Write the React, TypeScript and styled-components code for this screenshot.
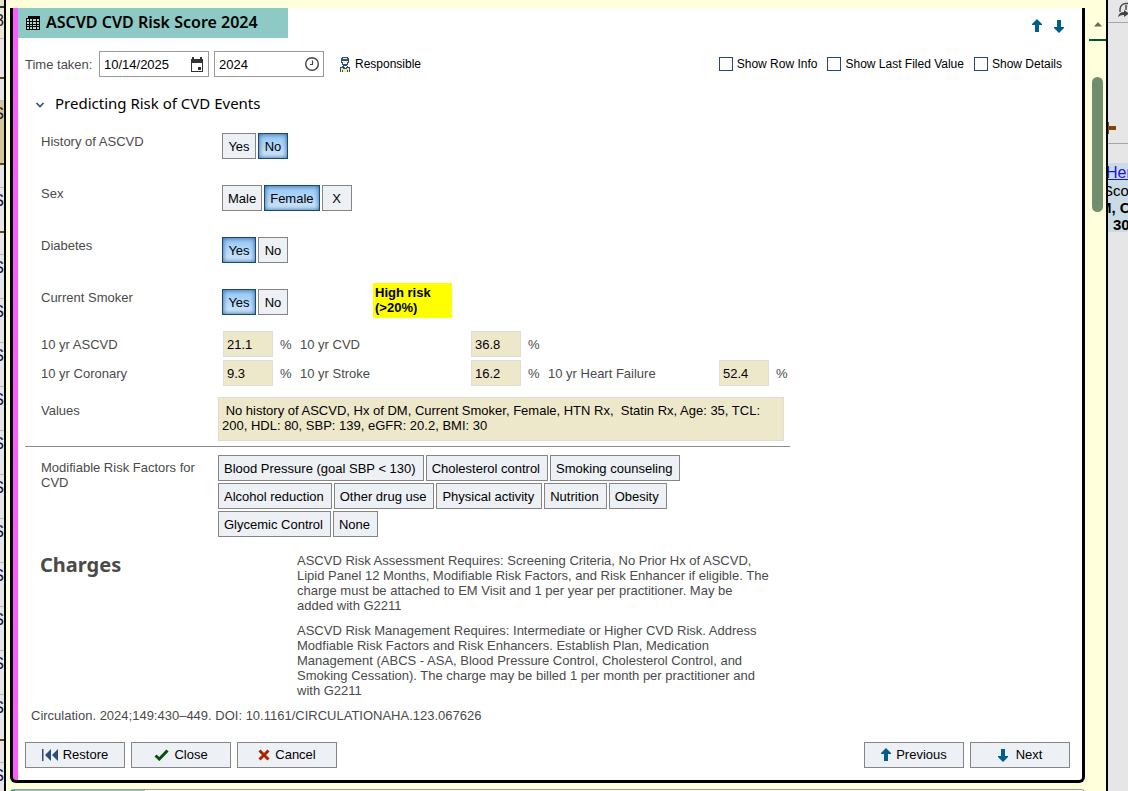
import React from 'react';
import styled, { createGlobalStyle, css } from 'styled-components';

const Global = createGlobalStyle`
  *, *::before, *::after { box-sizing: border-box; }
  body {
    margin: 0;
    background: #ffffdc;
    color: #000;
    font: 13px/15px "Liberation Sans", Arial, sans-serif;
  }
  button, input, textarea { font: inherit; color: inherit; }
  h1, h2, h3, p { margin: 0; }
`;

const Page = styled.div`
  display: grid;
  grid-template-columns: 6px minmax(0, 1fr) 17px 22px;
  height: 100vh;
  overflow: hidden;
`;

/* Sliver of the flowsheet on the left */
const Flowsheet = styled.div`
  border-right: 2px solid #000;
  background: #e6e6e9;
  overflow: hidden;
`;

const FlowCell = styled.div<{ $h: number; $bg?: string; $line?: string }>`
  display: flex;
  justify-content: flex-end;
  height: ${p => p.$h}px;
  background: ${p => p.$bg || '#e6e6e9'};
  border-bottom: ${p => (p.$line ? `2px solid ${p.$line}` : '1px solid #bdbdbd')};
  font-size: 16px;
  line-height: 25px;
  color: #14143c;
`;

const Center = styled.div`
  display: flex;
  flex-direction: column;
  padding: 8px 4px 0;
  min-width: 0;
`;

const Panel = styled.section`
  flex: none;
  border: 3px solid #000;
  border-top: 0;
  border-radius: 0 0 6px 6px;
  background: #000;
`;

const PanelBody = styled.div`
  border-left: 5px solid #ff5cff;
  border-radius: 0 0 3px 3px;
  background: #fff;
  padding-bottom: 12px;
`;

const TitleRow = styled.header`
  display: flex;
  justify-content: space-between;
  align-items: flex-start;
`;

const Title = styled.h1`
  display: flex;
  align-items: center;
  gap: 6px;
  width: 270px;
  height: 30px;
  padding-left: 8px;
  background: #8dcac5;
  font: 600 16px/28px "Noto Sans", "Open Sans", sans-serif;
  white-space: nowrap;
`;

const TitleText = styled.span`
  padding-bottom: 2px;
`;

const Arrows = styled.div`
  display: flex;
  gap: 6px;
  padding: 11px 15px 0 0;
`;

const IconButton = styled.button`
  display: flex;
  justify-content: center;
  width: 16px;
  padding: 0;
  border: 0;
  background: none;
`;

const Toolbar = styled.div`
  display: flex;
  align-items: center;
  padding: 13px 20px 0 7px;
`;

const TimeLabel = styled.label`
  width: 74px;
  color: #4a4a4a;
`;

const Picker = styled.div`
  display: flex;
  align-items: center;
  width: 110px;
  height: 26px;
  margin-right: 5px;
  padding-right: 4px;
  border: 1px solid #999;
`;

const PickerInput = styled.input`
  flex: 1;
  min-width: 0;
  height: 24px;
  padding: 0 4px;
  border: 0;
  background: none;
  outline: 0;
`;

const Responsible = styled.button`
  display: flex;
  align-items: center;
  gap: 5px;
  margin-left: 11px;
  padding: 0;
  border: 0;
  background: none;
  font-size: 12px;
`;

const Checks = styled.div`
  display: flex;
  gap: 10px;
  margin-left: auto;
  font-size: 12px;
`;

const CheckLabel = styled.label`
  display: flex;
  align-items: center;
  gap: 4px;
  white-space: nowrap;
`;

const Check = styled.input`
  appearance: none;
  width: 14px;
  height: 14px;
  margin: 0;
  border: 1px solid #27456f;
  background: #fff;
  &:checked { background: #27456f; }
`;

const SectionTitle = styled.h2`
  display: flex;
  align-items: center;
  gap: 10px;
  padding: 14px 0 18px 17px;
  font: 400 15px/24px "Noto Sans", "Open Sans", sans-serif;
  svg { margin-top: 4px; }
`;

const Form = styled.div`
  max-width: 772px;
  padding-left: 7px;
  color: #4a4a4a;
`;

const Question = styled.div`
  display: flex;
  height: 52px;
  padding-left: 16px;
`;

const QuestionLabel = styled.div<{ $narrow?: boolean }>`
  flex: none;
  width: ${p => (p.$narrow ? '177px' : '181px')};
  padding: ${p => (p.$narrow ? '5px 12px 0 0' : '1px 0 0')};
`;

const Options = styled.div`
  display: flex;
  flex-wrap: wrap;
  align-content: flex-start;
  gap: 2px;
`;

const pressed = css`
  border-color: #174a73;
  background: linear-gradient(#94c6f6, #d2e8ff);
  box-shadow: inset 0 0 5px #2b5f91;
`;

const Option = styled.button<{ $on?: boolean }>`
  height: 26px;
  min-width: 30px;
  padding: 0 5px;
  border: 1px solid #858585;
  background: #edf0f4;
  color: #000;
  white-space: nowrap;
  &:first-child { min-width: 34px; }
  ${p => p.$on && pressed}
`;

const Risk = styled.output`
  width: 79px;
  height: 35px;
  margin: -6px 0 0 85px;
  padding: 2px;
  background: #ff0;
  color: #000;
  font-weight: 700;
`;

const Scores = styled.div`
  display: grid;
  gap: 3px;
  padding: 0 0 11px 16px;
  margin-top: -10px;
`;

const ScoreRow = styled.div`
  display: flex;
`;

const Score = styled.div`
  display: flex;
  align-items: center;
  &:not(:last-child) { margin-right: 8px; }
`;

const ScoreLabel = styled.label<{ $first?: boolean }>`
  width: ${p => (p.$first ? '182px' : '171px')};
`;

const ScoreInput = styled.input`
  width: 50px;
  height: 26px;
  padding: 0 3px;
  border: 1px solid #dcdcdc;
  background: #eee8cb;
  color: #000;
`;

const Unit = styled.span`
  width: 12px;
  margin-left: 7px;
`;

const ValuesRow = styled.div`
  display: flex;
  padding: 0 6px 5px 16px;
`;

const ValuesLabel = styled.label`
  flex: none;
  width: 177px;
  padding-top: 6px;
`;

const ValuesBox = styled.textarea`
  flex: 1;
  height: 44px;
  padding: 5px 3px;
  border: 1px solid #dcdcdc;
  background: #eee8cb;
  color: #000;
  resize: none;
  overflow: hidden;
`;

const Rule = styled.hr`
  margin: 0;
  border: 0;
  border-top: 1px solid #8c8c8c;
`;

const Factors = styled.div`
  display: flex;
  padding: 8px 0 0 16px;
`;

const FactorOptions = styled(Options)`
  max-width: 480px;
  ${Option} { padding: 0 7px 0 5px; }
`;

const Charges = styled.div`
  display: flex;
  padding: 16px 8px 0 15px;
`;

const ChargesTitle = styled.h3`
  flex: none;
  width: 257px;
  font: 700 20px/24px "Noto Sans", "Open Sans", sans-serif;
`;

const ChargesText = styled.div`
  display: grid;
  gap: 10px;
  max-width: 474px;
`;

const Citation = styled.p`
  padding: 10px 0 19px 6px;
`;

const Footer = styled.footer`
  display: flex;
  gap: 6px;
  padding: 0 12px 0 7px;
`;

const Spacer = styled.div`
  flex: 1;
`;

const Action = styled.button<{ $gap?: number }>`
  display: flex;
  align-items: center;
  justify-content: center;
  gap: ${p => p.$gap || 5}px;
  width: 100px;
  height: 26px;
  padding: 0 0 1px;
  border: 1px solid #858585;
  background: #edf0f4;
`;

const NextPanel = styled.div`
  flex: none;
  height: 40px;
  margin-top: 6px;
  border: 1px solid #999;
  border-left: 5px solid #1f9a92;
  border-radius: 4px 4px 0 0;
  background: #fff;
`;

const NextTitle = styled.div`
  width: 130px;
  height: 30px;
  background: #8dcac5;
`;

const Scroll = styled.div`
  display: flex;
  flex-direction: column;
  align-items: center;
  padding: 22px 0 14px;
  > svg { flex: none; margin-bottom: 12px; }
`;

const ScrollEdge = styled.div`
  flex: none;
  align-self: stretch;
  height: 2px;
  background: #00543c;
`;

const Thumb = styled.div`
  width: 11px;
  height: 135px;
  margin: 36px 0 auto;
  border-radius: 6px;
  background: #6f8f6c;
`;

const Side = styled.aside`
  border-left: 2px solid #000;
  background: #e6e6e6;
  overflow: hidden;
`;

const SideHead = styled.div`
  height: 23px;
  padding: 2px 0 0 9px;
  border-bottom: 1px solid #a6a6a6;
`;

const SideBand = styled.div`
  height: 121px;
  padding-top: 99px;
  border-bottom: 1px solid #a6a6a6;
`;

const SideCard = styled.div`
  margin-top: 19px;
  height: 69px;
  background: #cbdbe6;
  font-size: 15px;
  line-height: 17px;
  white-space: nowrap;
`;

const SideLink = styled.a`
  display: block;
  margin-left: -2px;
  font-size: 16px;
  line-height: 19px;
  color: #1414e6;
`;

const SideLine = styled.div<{ $bold?: boolean; $shift?: number }>`
  margin-left: ${p => p.$shift || 0}px;
  font-weight: ${p => (p.$bold ? 700 : 400)};
`;

const ArrowIcon = ({ down = false }: { down?: boolean }) => (
  <svg width="10" height="14" viewBox="0 0 10 14" aria-hidden="true">
    <path
      d={down ? 'M3 1H7V8H10V9L5 14L0 9V8H3Z' : 'M3 13H7V6H10V5L5 0L0 5V6H3Z'}
      fill="#005f88"
    />
  </svg>
);

const TableIcon = () => (
  <svg width="14" height="14" viewBox="0 0 14 14" aria-hidden="true" shapeRendering="crispEdges">
    <path d="M2 0H14V14H0V2H2Z" fill="#000" />
    <path
      d="M1 3h2v2H1zM4 3h2v2H4zM7 3h3v2H7zM11 3h2v2h-2zM1 6h2v2H1zM4 6h2v2H4zM7 6h3v2H7zM11 6h2v2h-2zM1 9h2v1H1zM4 9h2v1H4zM7 9h3v1H7zM11 9h2v1h-2zM1 11h2v2H1zM4 11h2v2H4zM7 11h3v2H7zM11 11h2v2h-2z"
      fill="#a5dad6"
    />
  </svg>
);

const CalendarIcon = () => (
  <svg width="14" height="15" viewBox="0 0 14 15" aria-hidden="true" shapeRendering="crispEdges">
    <path d="M1 2H2V0H4V2H10V0H12V2H13V15H1ZM2 6V14H12V6Z" fill="#333" fillRule="evenodd" />
    <rect x="8" y="10" width="3" height="3" fill="#333" />
  </svg>
);

const ClockIcon = () => (
  <svg width="14" height="14" viewBox="0 0 14 14" aria-hidden="true" fill="none" stroke="#444">
    <circle cx="7" cy="7" r="6.3" strokeWidth="1.4" />
    <path d="M7.5 3.5V7.5H5" strokeWidth="1.2" />
  </svg>
);

const PersonIcon = () => (
  <svg width="10" height="15" viewBox="0 0 10 15" aria-hidden="true" shapeRendering="crispEdges">
    <path d="M2 0H8V1H9V6H8V8H7V9H3V8H2V6H1V1H2Z" fill="#2d5080" />
    <path d="M3 1H7V2H3Z" fill="#fff3a8" />
    <path d="M2 4H8V5H7V7H3V5H2Z" fill="#fff3c8" />
    <path d="M0 10H2V9H3L5 11L7 9H8V10H10V15H0Z" fill="#2d5080" />
    <path d="M1 11H3V12H7V11H9V15H8V13H7V15H3V13H2V15H1Z" fill="#ffeb91" />
    <path d="M3 12H7V15H3Z" fill="#ffeb91" />
  </svg>
);

const ChevronIcon = () => (
  <svg width="10" height="6" viewBox="0 0 10 6" aria-hidden="true">
    <path d="M1.5 1L5 4.5L8.5 1" fill="none" stroke="#2b4c7e" strokeWidth="1.6" />
  </svg>
);

const RestoreIcon = () => (
  <svg width="16" height="12" viewBox="0 0 16 12" aria-hidden="true">
    <path d="M0 0H1.5V12H0ZM9 0V12L3 6ZM16 0V12L10 6Z" fill="#2b4c78" />
  </svg>
);

const CheckIcon = () => (
  <svg width="15" height="12" viewBox="0 0 15 12" aria-hidden="true">
    <path d="M1.5 6.5L5.3 10L13.5 1.5" fill="none" stroke="#075207" strokeWidth="3" />
  </svg>
);

const CrossIcon = () => (
  <svg width="12" height="12" viewBox="0 0 12 12" aria-hidden="true">
    <path d="M1.5 1.5L10.5 10.5M10.5 1.5L1.5 10.5" stroke="#ab2500" strokeWidth="3" />
  </svg>
);

const ScrollUpIcon = () => (
  <svg width="8" height="5" viewBox="0 0 8 5" aria-hidden="true">
    <path d="M4 0L8 4.5H0Z" fill="#6b6b45" />
  </svg>
);

const ForwardIcon = () => (
  <svg width="20" height="17" viewBox="0 0 20 17" aria-hidden="true" fill="none" stroke="#444">
    <path d="M3 10V7A6 6 0 0 1 9 1.5H16" strokeWidth="1.4" />
    <path d="M9 3V8M11 4L16 9" strokeWidth="1.4" />
    <path d="M1 15Q2 10 7 10V8L12 11.5L7 15V13Q4 12.5 1 15Z" fill="#444" stroke="none" />
  </svg>
);

const MarkerIcon = () => (
  <svg width="9" height="12" viewBox="0 0 9 12" aria-hidden="true">
    <path d="M0 0H1V4H8V8H1V12H0Z" fill="#7a4a0c" />
  </svg>
);

const flow = [
  { h: 8, bg: '#e8e4d2', line: '#333' },
  { h: 31, bg: '#ebe7d2', t: '3' },
  { h: 40, line: '#5c4c14' },
  { h: 22 },
  { h: 64, bg: '#d6c697', line: '#5c4c14', t: 'S' },
  { h: 23 },
  { h: 45, line: '#5c4c14', t: 'S' },
  { h: 22 },
  { h: 44, t: 'S' },
  { h: 44, t: 'S' },
  { h: 44, t: 'S' },
  { h: 44, t: 'S' },
  { h: 44, t: 'S' },
  { h: 44, t: 'S' },
  { h: 44, t: 'S' },
  { h: 44, t: 'S' },
  { h: 44, t: 'S' },
  { h: 44, t: 'S' },
  { h: 46, t: 'S', line: '#5c4c14' },
  { h: 22 },
  { h: 44, t: 'S' },
];

const questions = [
  { label: 'History of ASCVD', options: ['Yes', 'No'], on: 'No' },
  { label: 'Sex', options: ['Male', 'Female', 'X'], on: 'Female' },
  { label: 'Diabetes', options: ['Yes', 'No'], on: 'Yes' },
  { label: 'Current Smoker', options: ['Yes', 'No'], on: 'Yes', risk: 'High risk (>20%)' },
];

const scores = [
  [['10 yr ASCVD', '21.1'], ['10 yr CVD', '36.8']],
  [['10 yr Coronary', '9.3'], ['10 yr Stroke', '16.2'], ['10 yr Heart Failure', '52.4']],
];

const factors = [
  'Blood Pressure (goal SBP < 130)', 'Cholesterol control', 'Smoking counseling',
  'Alcohol reduction', 'Other drug use', 'Physical activity', 'Nutrition', 'Obesity',
  'Glycemic Control', 'None',
];

export default function App() {
  return (
    <Page>
      <Global />
      <Flowsheet>
        {flow.map((c, i) => (
          <FlowCell key={i} $h={c.h} $bg={c.bg} $line={c.line}>{c.t}</FlowCell>
        ))}
      </Flowsheet>

      <Center>
        <Panel>
          <PanelBody>
            <TitleRow>
              <Title><TableIcon /><TitleText>ASCVD CVD Risk Score 2024</TitleText></Title>
              <Arrows>
                <IconButton aria-label="Previous section"><ArrowIcon /></IconButton>
                <IconButton aria-label="Next section"><ArrowIcon down /></IconButton>
              </Arrows>
            </TitleRow>

            <Toolbar>
              <TimeLabel htmlFor="date">Time taken:</TimeLabel>
              <Picker><PickerInput id="date" defaultValue="10/14/2025" /><CalendarIcon /></Picker>
              <Picker><PickerInput aria-label="Time" defaultValue="2024" /><ClockIcon /></Picker>
              <Responsible><PersonIcon />Responsible</Responsible>
              <Checks>
                {['Show Row Info', 'Show Last Filed Value', 'Show Details'].map(t => (
                  <CheckLabel key={t}><Check type="checkbox" />{t}</CheckLabel>
                ))}
              </Checks>
            </Toolbar>

            <SectionTitle><ChevronIcon />Predicting Risk of CVD Events</SectionTitle>

            <Form>
              {questions.map(q => (
                <Question key={q.label} role="group" aria-label={q.label}>
                  <QuestionLabel>{q.label}</QuestionLabel>
                  <Options>
                    {q.options.map(o => (
                      <Option key={o} $on={o === q.on} aria-pressed={o === q.on}>{o}</Option>
                    ))}
                  </Options>
                  {q.risk && <Risk>{q.risk}</Risk>}
                </Question>
              ))}

              <Scores>
                {scores.map((row, r) => (
                  <ScoreRow key={r}>
                    {row.map(([label, value], i) => (
                      <Score key={label}>
                        <ScoreLabel $first={i === 0} htmlFor={label}>{label}</ScoreLabel>
                        <ScoreInput id={label} defaultValue={value} readOnly />
                        <Unit>%</Unit>
                      </Score>
                    ))}
                  </ScoreRow>
                ))}
              </Scores>

              <ValuesRow>
                <ValuesLabel htmlFor="values">Values</ValuesLabel>
                <ValuesBox
                  id="values"
                  readOnly
                  defaultValue=" No history of ASCVD, Hx of DM, Current Smoker, Female, HTN Rx,  Statin Rx, Age: 35, TCL: 200, HDL: 80, SBP: 139, eGFR: 20.2, BMI: 30"
                />
              </ValuesRow>

              <Rule />

              <Factors role="group" aria-label="Modifiable Risk Factors for CVD">
                <QuestionLabel $narrow>Modifiable Risk Factors for CVD</QuestionLabel>
                <FactorOptions>
                  {factors.map(f => <Option key={f}>{f}</Option>)}
                </FactorOptions>
              </Factors>

              <Charges>
                <ChargesTitle>Charges</ChargesTitle>
                <ChargesText>
                  <p>
                    ASCVD Risk Assessment Requires: Screening Criteria, No Prior Hx of ASCVD, Lipid Panel
                    12 Months, Modifiable Risk Factors, and Risk Enhancer if eligible. The charge must be
                    attached to EM Visit and 1 per year per practitioner. May be added with G2211
                  </p>
                  <p>
                    ASCVD Risk Management Requires: Intermediate or Higher CVD Risk. Address Modfiable
                    Risk Factors and Risk Enhancers. Establish Plan, Medication Management (ABCS - ASA,
                    Blood Pressure Control, Cholesterol Control, and Smoking Cessation). The charge may be
                    billed 1 per month per practitioner and with G2211
                  </p>
                </ChargesText>
              </Charges>

              <Citation>Circulation. 2024;149:430–449. DOI: 10.1161/CIRCULATIONAHA.123.067626</Citation>
            </Form>

            <Footer>
              <Action><RestoreIcon />Restore</Action>
              <Action><CheckIcon />Close</Action>
              <Action><CrossIcon />Cancel</Action>
              <Spacer />
              <Action><ArrowIcon />Previous</Action>
              <Action $gap={8}><ArrowIcon down />Next</Action>
            </Footer>
          </PanelBody>
        </Panel>
        <NextPanel><NextTitle /></NextPanel>
      </Center>

      <Scroll>
        <ScrollUpIcon />
        <ScrollEdge />
        <Thumb />
        <ScrollEdge />
      </Scroll>

      <Side>
        <SideHead><ForwardIcon /></SideHead>
        <SideBand><MarkerIcon /></SideBand>
        <SideCard>
          <SideLink href="#her">Her</SideLink>
          <SideLine $shift={-5}>Scor</SideLine>
          <SideLine $bold $shift={-9}>M, C</SideLine>
          <SideLine $bold $shift={5}>30</SideLine>
        </SideCard>
      </Side>
    </Page>
  );
}
